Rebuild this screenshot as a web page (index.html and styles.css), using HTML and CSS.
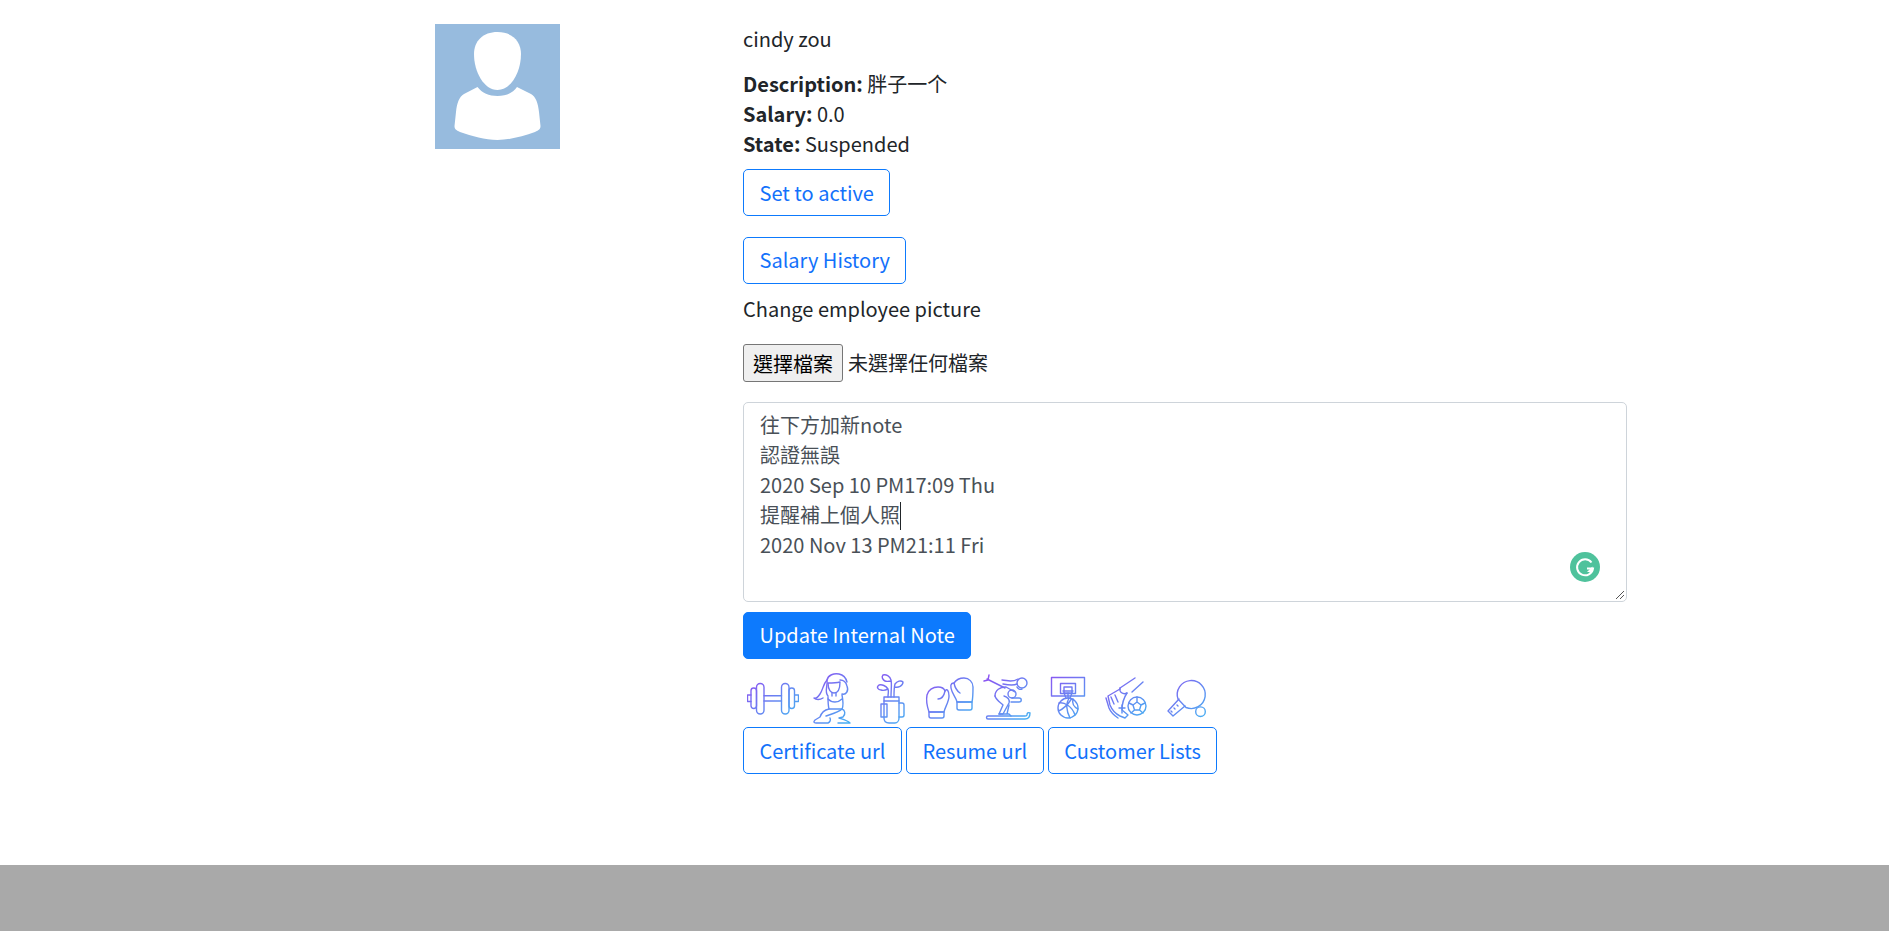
FILE: index.html
```html
<!DOCTYPE html>
<html lang="en">

<head>
    <meta charset="UTF-8">
    <meta name="viewport" content="width=device-width, initial-scale=1.0">
    <title>Employee</title>
    <link rel="stylesheet" href="styles.css">
</head>

<body>
    <main class="profile">
        <div class="photo-col">
            <svg class="avatar" viewBox="0 0 125 125">
                <rect width="125" height="125" fill="#97bbde" />
                <path fill="#fff" d="M62.5 8C48 8 39 17 39 30c0 18 10 36 23.500 36S86 48 86 30C86 17 77 8 62.500 8z" />
                <path fill="#fff" d="M42.500 63c4.500 6 11.500 9 20 9s15.500-3 19.500-9l14 7c5 3 7 9 8 18l1.500 14c0 3-1.500 4-5.500 6-12 4-25 8-37.500 8s-25.500-4-37.500-8c-4-2-5.500-3-5.500-6L21 88c1-9 3-15 8-18z" />
            </svg>
        </div>
        <div class="info-col">
            <p class="name">cindy zou</p>
            <div class="details">
                <div><b>Description:</b> 胖子一个</div>
                <div><b>Salary:</b> 0.0</div>
                <div><b>State:</b> Suspended</div>
            </div>
            <a class="btn btn-outline state-btn">Set to active</a>
            <a class="btn btn-outline history-btn btn-up">Salary History</a>
            <p class="change-label">Change employee picture</p>
            <div class="file-row">
                <button class="file-btn">選擇檔案</button>
                <span>未選擇任何檔案</span>
            </div>
            <div class="note-box">
                <div class="note-text">往下方加新note<br>認證無誤<br>2020 Sep 10 PM17:09 Thu<br>提醒補上個人照<span class="caret"></span><br>2020 Nov 13 PM21:11 Fri</div>
                <svg class="grammarly" viewBox="0 0 30 30">
                    <circle cx="15" cy="15" r="15" fill="#4fc29c" />
                    <path fill="none" stroke="#fff" stroke-width="2" d="M21.500 10.500a8 8 0 1 0 1.500 6h-6" />
                    <path fill="#fff" d="M22.500 14.500v5.500h-5.500z" />
                </svg>
                <svg class="grip" viewBox="0 0 10 10">
                    <path stroke="#555" stroke-width="1" d="M1 9L9 1M5 9L9 5" />
                </svg>
            </div>
            <a class="btn btn-primary btn-up">Update Internal Note</a>
            <div class="sports">
                <!-- dumbbell -->
                <svg viewBox="0 0 52 52" class="sport">
                    <defs>
                        <linearGradient id="grad" gradientUnits="userSpaceOnUse" x1="4" y1="4" x2="44" y2="48">
                            <stop offset="0" stop-color="#8f50f2" />
                            <stop offset="1" stop-color="#48aef2" />
                        </linearGradient>
                    </defs>
                    <g class="line">
                        <path d="M4 23H.5v6.500H4M48 23h3.500v6.500H48" />
                        <rect x="4" y="16" width="5.500" height="20.500" rx="2.700" />
                        <rect x="9.500" y="11.500" width="7.500" height="30.500" rx="3.700" />
                        <rect x="34.500" y="11.500" width="7.500" height="30.500" rx="3.700" />
                        <rect x="42" y="16" width="5.500" height="20.500" rx="2.700" />
                        <path d="M17 23.700h17.500M17 29h17.500" />
                    </g>
                </svg>
                <!-- yoga -->
                <svg viewBox="0 0 52 52" class="sport">
                    <g class="line">
                        <path d="M22 24c-4-4 0-10-1-16 1-5 7-7 12-6 5 1 7 4 8 8" />
                        <path d="M21 8c-4 4-4 10-7 14-2 3-4 5-6 4 2 2 6 2 9 0" />
                        <path d="M22 11c0 7 3 10 6 10s6-3 6-11c-4 1-8 1-12 1z" />
                        <path d="M36 22c4 1 7-3 5-8-1-4-4-6-7-6M26 21v3M30 21v3" />
                        <path d="M22 25c0 5 0 8 1 12h13c2-4 1-9 0-14" />
                        <path d="M22 27c4 4 10 4 14 0" />
                        <path d="M23 37c-5 1-8 5-9 8l-5 3c-2 2-1 3 1 3h12c2-1 3-3 2-5" />
                        <path d="M20 44c6-2 13-4 16-7 3 1 4 5 1 8l-4 1c3 1 8 2 11 5H32" />
                    </g>
                </svg>
                <!-- golf bag -->
                <svg viewBox="0 0 52 52" class="sport">
                    <g class="line">
                        <path d="M20 25h15v4H20z" />
                        <path d="M20 29v17c0 3 2 5 5 5h6c2 0 4-2 4-5V29" />
                        <path d="M17 32h6v13h-6z" />
                        <path d="M35 31h3a2 2 0 0 1 2 2v10a2 2 0 0 1-2 2h-3" />
                        <path d="M27 25c0-8 1-13 0-17-1-4-5-6-8-5-2 2 0 5 2 6s4 0 6 0" />
                        <path d="M24 25c0-4 1-6 0-8-2-3-6-5-9-4-3 2-1 5 2 5 3 1 5 0 7-1" />
                        <path d="M30 25c0-5 0-10 1-13 2-3 6-4 8-2 0 4-5 6-8 5" />
                    </g>
                </svg>
                <!-- boxing gloves -->
                <svg viewBox="0 0 52 52" class="sport">
                    <g class="line">
                        <path d="M6 40C4 34 3 28 4 23c1-5 6-8 11-8 3 0 6 1 7 4 2-3 4 0 4 5 0 6-4 11-5 16z" />
                        <path d="M6 40h15v4a2 2 0 0 1-2 2H8a2 2 0 0 1-2-2z" />
                        <path d="M15 27c3 0 6-3 7-8" />
                        <path d="M34 30c-1-5-5-8-6-14-1-5 2-5 3-5 2-3 6-5 10-5 5 0 9 4 9 9 0 6 0 11-1 15z" />
                        <path d="M34 30h15v6a2 2 0 0 1-2 2H36a2 2 0 0 1-2-2z" />
                        <path d="M31 11c1 5 3 8 6 10" />
                    </g>
                </svg>
                <!-- skier -->
                <svg viewBox="0 0 52 52" class="sport">
                    <g class="line">
                        <path d="M6 7l18 9M8 3L7 8l-4 1" />
                        <path d="M7 47h37c3 0 5-2 5-6-2-1-3 0-3 2 0 1-1 1-2 1H7c-2 0-2 3 0 3z" />
                        <circle cx="41" cy="11" r="5" />
                        <path d="M21 8c5 0 9 3 16-1M22 12c5 1 10 2 14 0" />
                        <path d="M14 24c0-6 5-9 11-9l9 5" />
                        <circle cx="31" cy="22" r="4" />
                        <path d="M14 24c1 4 6 7 8 9l-4 9h4l6-11c1-3-1-6-5-7" />
                        <path d="M28 33l-2 9M18 42h10l2 2" />
                        <path d="M31 26h7c3 0 3 4 0 4h-8" />
                        <path d="M36 15c1 2 3 3 5 2" />
                    </g>
                </svg>
                <!-- basketball -->
                <svg viewBox="0 0 52 52" class="sport">
                    <g class="line">
                        <path d="M11.500 5.500h33v18.500h-33z" />
                        <path d="M20.500 11.500h15v10h-15zM24 15h8v6h-8z" />
                        <path d="M23 19h10M24 21l2 5M32 21l-2 5M28 21v5" />
                        <circle cx="28" cy="36" r="10" />
                        <path d="M29 26c-3 5-3 12 1 20M19 31c5-1 13 3 16 12M18.500 39c5-2 9-6 13-12M33 27c-1 4 1 8 5 10" />
                    </g>
                </svg>
                <!-- football boot -->
                <svg viewBox="0 0 52 52" class="sport">
                    <g class="line">
                        <path d="M37 6L22 16M45 10L34 20" />
                        <path d="M22 16c-1 4 3 7 7 5" />
                        <path d="M22 17l-12 7 2 9c2 5 6 9 10 11l5 2 3-3-6-5c0-6 1-11 5-17" />
                        <path d="M8 26l3 10c2 5 6 8 9 10" />
                        <path d="M13 25l3 7M17 23l3 7M24 33v8M21 36h6" />
                        <circle cx="39" cy="34" r="9" />
                        <path d="M39 30l4 3-1.500 5h-5L35 33zM39 25v5M47 31l-4 2M45 41l-3.500-3M33 41l3.500-3M31 31l4 2" />
                    </g>
                </svg>
                <!-- table tennis -->
                <svg viewBox="0 0 52 52" class="sport">
                    <g class="line">
                        <path d="M21 27A14 14 0 1 1 29 35.500z" />
                        <path d="M22 27L11 39l5 5 12-10" />
                        <path d="M14 39l1 1M17 36l1 1M20 33l1 1" />
                        <circle cx="43.500" cy="39.700" r="4.800" />
                    </g>
                </svg>
            </div>
            <div class="link-row">
                <a class="btn btn-outline">Certificate url</a>
                <a class="btn btn-outline">Resume url</a>
                <a class="btn btn-outline">Customer Lists</a>
            </div>
        </div>
    </main>

    <footer class="footer"></footer>
</body>

</html>
```

FILE: styles.css
```css
* {
    box-sizing: border-box;
}

body {
    margin: 0;
    font-family: "Noto Sans CJK TC", "Noto Sans", sans-serif;
    font-size: 20px;
    line-height: 30px;
    color: #212529;
    background: #fff;
}

p {
    margin: 0;
}

/* Main layout */
.profile {
    display: flex;
    height: 865px;
    padding: 24px 0 0 434.5px;
}

.photo-col {
    width: 308.5px;
}

.avatar {
    display: block;
    width: 125px;
    height: 125px;
}

.info-col {
    width: 884px;
}

.name {
    margin-bottom: 15px;
}

.details {
    margin-bottom: 10px;
}

.details b {
    font-weight: 700;
}

/* Buttons */
.btn {
    display: inline-block;
    padding: 7.5px 15.5px;
    border: 1px solid #0d7afd;
    border-radius: 5px;
    font-size: 20px;
    line-height: 30px;
}

.btn-up {
    padding-top: 7px;
    padding-bottom: 8px;
}

.btn-outline {
    color: #1271fb;
    background: #fff;
}

.btn-primary {
    color: #fff;
    background: #0d7afd;
}

.state-btn {
    display: table;
    margin-bottom: 21px;
}

.history-btn {
    display: table;
    margin-bottom: 10px;
}

.change-label {
    margin-bottom: 20px;
}

/* File picker */
.file-row {
    display: flex;
    align-items: center;
    gap: 5px;
    margin-bottom: 20px;
}

.file-btn {
    height: 38px;
    width: 100px;
    padding: 0;
    border: 1px solid #767676;
    border-radius: 3px;
    background: #efefef;
    color: #000;
    font-family: inherit;
    font-size: 20px;
}

/* Internal note */
.note-box {
    position: relative;
    height: 200px;
    margin-bottom: 10px;
    padding: 7px 16px;
    border: 1px solid #ced4da;
    border-radius: 5px;
    color: #495057;
}

.caret {
    display: inline-block;
    width: 1px;
    height: 28px;
    margin-bottom: -7px;
    background: #212529;
}

.grammarly {
    position: absolute;
    right: 26px;
    bottom: 19px;
    width: 30px;
    height: 30px;
}

.grip {
    position: absolute;
    right: 1px;
    bottom: 1px;
    width: 10px;
    height: 10px;
}

/* Sport icons */
.sports {
    display: flex;
    gap: 6.5px;
    margin: 13px 0 3px 4px;
}

.sport {
    width: 52px;
    height: 52px;
}

.line {
    fill: none;
    stroke: url(#grad);
    stroke-width: 1.4;
    stroke-linejoin: round;
    stroke-linecap: round;
}

.link-row {
    display: flex;
    gap: 4px;
}

.footer {
    height: 66px;
    background: #a9a9a9;
}
```
